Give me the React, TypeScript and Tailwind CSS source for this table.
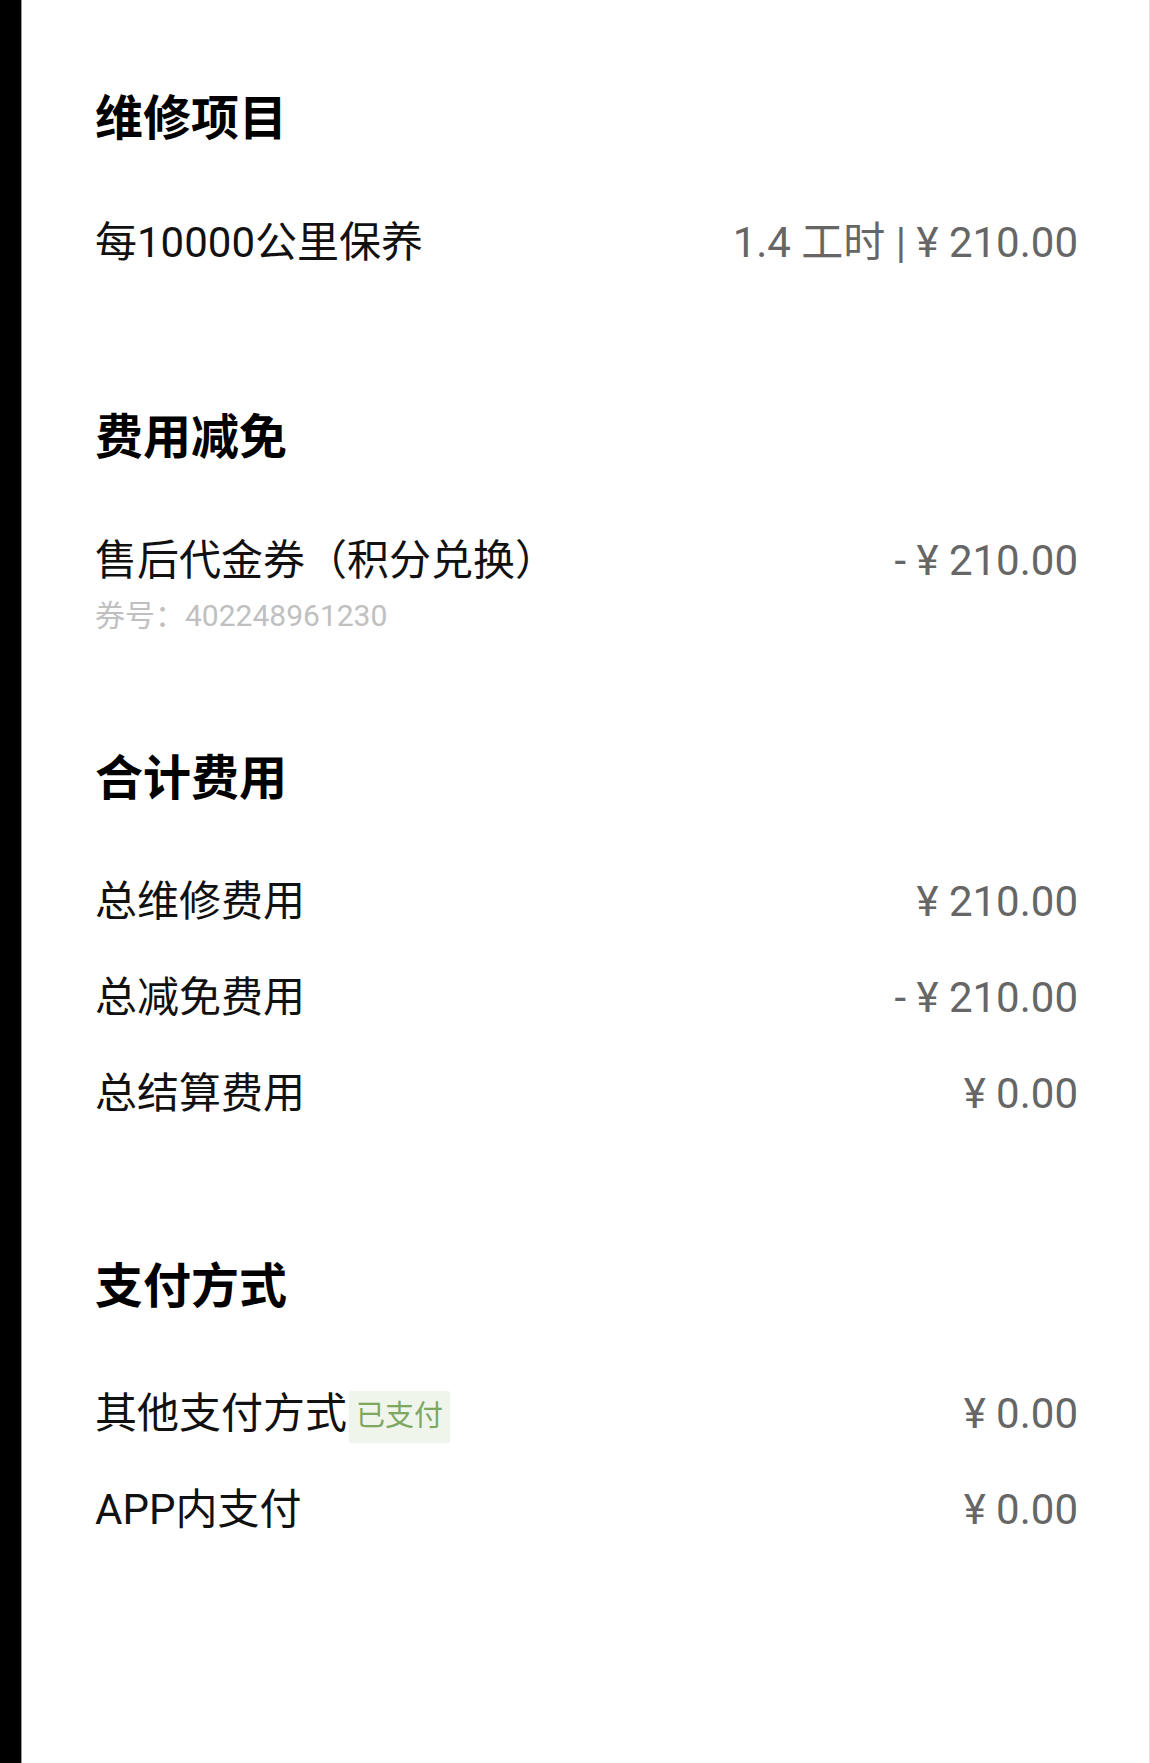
import React from "react";

interface RowProps {
  label: React.ReactNode
  value: string
}

function Row({ label, value } : RowProps) {
  return (
    <div className="h-[96px] flex items-center justify-between">
      <div className="text-[42px] text-[#111111] flex items-center">{label}</div>
      <div className="text-[42px] text-[#666666]">{value}</div>
    </div>
  )
}

function Heading({ title } : { title: string }) {
  return (
    <p className="text-[48px] leading-[56px] font-bold text-black">{title}</p>
  )
}

export default function App() {
  return (
    <div className="flex min-h-[1763px] bg-white" style={{ fontFamily: "Roboto, 'Noto Sans CJK SC', sans-serif" }}>
      <div className="w-[22px] bg-black border-r border-[#9a9a9a] shrink-0" />
      <div className="flex-1 pl-[73px] pr-[71px] pt-[91px] border-r border-[#e6e6e6]">
        <section>
          <Heading title="维修项目" />
          <div className="mt-[47px]">
            <Row label="每10000公里保养" value="1.4 工时 | ¥ 210.00" />
          </div>
        </section>

        <section className="mt-[120px]">
          <Heading title="费用减免" />
          <div className="mt-[46px]">
            <Row label="售后代金券（积分兑换）" value="- ¥ 210.00" />
            <p className="-mt-[12px] text-[30px] leading-[40px] text-[#c0c0c0]">券号：402248961230</p>
          </div>
        </section>

        <section className="mt-[115px]">
          <Heading title="合计费用" />
          <div className="mt-[46px]">
            <Row label="总维修费用" value="¥ 210.00" />
            <Row label="总减免费用" value="- ¥ 210.00" />
            <Row label="总结算费用" value="¥ 0.00" />
          </div>
        </section>

        <section className="mt-[118px]">
          <Heading title="支付方式" />
          <div className="mt-[50px]">
            <Row
              label={
                <>
                  <span>其他支付方式</span>
                  <span className="ml-[2px] mt-[8px] px-[7px] h-[52px] flex items-center bg-[#f0f5ec] text-[#7da862] text-[29px] rounded-[2px]">已支付</span>
                </>
              }
              value="¥ 0.00"
            />
            <Row label="APP内支付" value="¥ 0.00" />
          </div>
        </section>
      </div>
    </div>
  )
}
